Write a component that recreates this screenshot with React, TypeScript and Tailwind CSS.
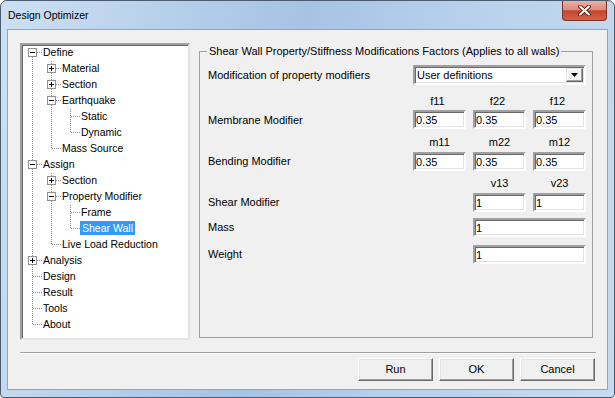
import React from "react";

type TreeNode = { label: string; box?: "+" | "-"; kids?: TreeNode[]; sel?: boolean };
type Row = { label: string; box?: "+" | "-"; sel?: boolean; last: boolean; first: boolean; trail: boolean[] };

const tree: TreeNode[] = [
  {
    label: "Define",
    box: "-",
    kids: [
      { label: "Material", box: "+" },
      { label: "Section", box: "+" },
      { label: "Earthquake", box: "-", kids: [{ label: "Static" }, { label: "Dynamic" }] },
      { label: "Mass Source" },
    ],
  },
  {
    label: "Assign",
    box: "-",
    kids: [
      { label: "Section", box: "+" },
      { label: "Property Modifier", box: "-", kids: [{ label: "Frame" }, { label: "Shear Wall", sel: true }] },
      { label: "Live Load Reduction" },
    ],
  },
  { label: "Analysis", box: "+" },
  { label: "Design" },
  { label: "Result" },
  { label: "Tools" },
  { label: "About" },
];

function flatten(nodes: TreeNode[], trail: boolean[], out: Row[]) {
  nodes.forEach((n, i) => {
    const last = i === nodes.length - 1;
    out.push({ label: n.label, box: n.box, sel: n.sel, last, first: trail.length === 0 && i === 0, trail });
    if (n.box === "-" && n.kids) flatten(n.kids, [...trail, last], out);
  });
  return out;
}

const dot = { stroke: "#8c8c8c", strokeDasharray: "1 1" };

function Guide({ on }: { on: boolean }) {
  return (
    <svg width="19" height="16" className="shrink-0">
      {on && <line x1="9.5" y1="0" x2="9.5" y2="16" {...dot} />}
    </svg>
  );
}

function Joint({ box, last, first }: { box?: "+" | "-"; last: boolean; first: boolean }) {
  const top = box ? 3 : 7;
  const bottom = box ? 12 : 8;
  return (
    <svg width="19" height="16" className="shrink-0">
      {!first && <line x1="9.5" y1="0" x2="9.5" y2={top} {...dot} />}
      {!last && <line x1="9.5" y1={bottom} x2="9.5" y2="16" {...dot} />}
      <line x1={box ? 14 : 10} y1="7.5" x2="19" y2="7.5" {...dot} />
      {box && (
        <>
          <rect x="5.5" y="3.5" width="8" height="8" fill="#fff" stroke="#8f8f8f" />
          <line x1="7" y1="7.5" x2="12" y2="7.5" stroke="#000" />
          {box === "+" && <line x1="9.5" y1="5" x2="9.5" y2="10" stroke="#000" />}
        </>
      )}
    </svg>
  );
}

function Field({ value }: { value: string }) {
  return (
    <input
      readOnly
      value={value}
      className="w-full h-[19px] bg-white border-2 border-t-[#a0a0a0] border-l-[#a0a0a0] border-r-white border-b-white shadow-[inset_1px_1px_0_#696969,inset_-1px_-1px_0_#e3e3e3] pl-[1px] text-[11px] text-black outline-none"
    />
  );
}

function Btn({ label }: { label: string }) {
  return (
    <button className="w-[75px] h-[23px] bg-[#f0f0f0] border border-t-white border-l-white border-r-[#696969] border-b-[#696969] shadow-[inset_-1px_-1px_0_#a0a0a0,inset_1px_1px_0_#e3e3e3] text-[11px] text-black">
      {label}
    </button>
  );
}

export default function App() {
  const rows = flatten(tree, [], []);
  return (
    <div className="w-[615px] h-[398px] bg-white font-['Liberation_Sans',Arial,sans-serif]">
      <div className="w-full h-full flex flex-col px-[6px] pb-[7px] border border-[#4b5b70] rounded-t-[7px] rounded-b-[4px] bg-[linear-gradient(100deg,#cde0f3_0%,#b6cfea_25%,#a7c3e3_45%,#b9d1ec_70%,#c6dbf1_100%)]">
        <div className="h-[28px] flex items-start justify-between">
          <span className="pl-[1px] pt-[8px] text-[10.5px] leading-[13px] text-black">Design Optimizer</span>
          <div className="mr-[1px] w-[45px] h-[20px] flex items-center justify-center rounded-b-[4px] border border-t-0 border-[#7a3024] bg-[linear-gradient(to_bottom,#eab0a4_0%,#dc8e7e_45%,#c5432f_52%,#d2644a_100%)]">
            <svg width="13" height="11" viewBox="0 0 13 11">
              <path d="M2 1.5 L11 9.5 M11 1.5 L2 9.5" stroke="#5a1a12" strokeWidth="4" strokeLinecap="round" />
              <path d="M2 1.5 L11 9.5 M11 1.5 L2 9.5" stroke="#fff" strokeWidth="2.2" strokeLinecap="round" />
            </svg>
          </div>
        </div>

        <div className="flex-1 flex flex-col bg-[#f0f0f0] border border-[#8fa6c0] text-[11px] text-black">
          <div className="flex pl-[12px] pt-[13px] gap-[9px]">
            <div className="w-[170px] h-[297px] bg-white border-2 border-t-[#a0a0a0] border-l-[#a0a0a0] border-r-[#e3e3e3] border-b-[#e3e3e3] shadow-[inset_1px_1px_0_#696969] pl-[1px] text-[10.5px]">
              {rows.map((r, i) => (
                <div key={i} className="flex items-start h-[16px]">
                  {r.trail.map((wasLast, j) => (
                    <Guide key={j} on={!wasLast} />
                  ))}
                  <Joint box={r.box} last={r.last} first={r.first} />
                  <span
                    className={
                      r.sel
                        ? "h-[14px] leading-[14px] px-[2px] bg-[#3399ff] text-white whitespace-nowrap"
                        : "h-[14px] leading-[14px] px-[1px] whitespace-nowrap"
                    }
                  >
                    {r.label}
                  </span>
                </div>
              ))}
            </div>

            <fieldset className="mt-[2px] w-[394px] h-[293px] border border-[#a0a0a0] pl-[7px] pr-[6px] flex flex-col">
              <legend className="px-[2px] leading-[13px]">
                Shear Wall Property/Stiffness Modifications Factors (Applies to all walls)
              </legend>

              <div className="flex items-center mt-[7px]">
                <span className="flex-1 pl-[1px]">Modification of property modifiers</span>
                <div className="w-[173px] h-[20px] flex items-center bg-white border-2 border-t-[#a0a0a0] border-l-[#a0a0a0] border-r-white border-b-white shadow-[inset_1px_1px_0_#696969,inset_-1px_-1px_0_#e3e3e3] pl-[2px] pr-[1px]">
                  <span className="flex-1">User definitions</span>
                  <div className="w-[17px] h-[14px] flex items-center justify-center bg-[#f0f0f0] border border-t-[#e3e3e3] border-l-[#e3e3e3] border-r-[#696969] border-b-[#696969] shadow-[inset_-1px_-1px_0_#a0a0a0,inset_1px_1px_0_#fff]">
                    <svg width="7" height="4" viewBox="0 0 7 4">
                      <path d="M0 0 H7 L3.5 4 Z" fill="#000" />
                    </svg>
                  </div>
                </div>
              </div>

              <div className="flex mt-[10px] h-[13px] leading-[13px]">
                <div className="flex-1" />
                <div className="w-[173px] grid grid-cols-3 gap-[7px] text-center">
                  <span className="pr-[4px]">f11</span>
                  <span className="pr-[4px]">f22</span>
                  <span className="pr-[4px]">f12</span>
                </div>
              </div>
              <div className="flex items-center mt-[2px]">
                <span className="flex-1 pl-[1px] pt-[1px]">Membrane Modifier</span>
                <div className="w-[173px] grid grid-cols-3 gap-[7px]">
                  <Field value="0.35" />
                  <Field value="0.35" />
                  <Field value="0.35" />
                </div>
              </div>

              <div className="flex mt-[7px] h-[13px] leading-[13px]">
                <div className="flex-1" />
                <div className="w-[173px] grid grid-cols-3 gap-[7px] text-center">
                  <span>m11</span>
                  <span>m22</span>
                  <span>m12</span>
                </div>
              </div>
              <div className="flex items-center mt-[3px]">
                <span className="flex-1 pl-[1px]">Bending Modifier</span>
                <div className="w-[173px] grid grid-cols-3 gap-[7px]">
                  <Field value="0.35" />
                  <Field value="0.35" />
                  <Field value="0.35" />
                </div>
              </div>

              <div className="flex mt-[6px] h-[13px] leading-[13px]">
                <div className="flex-1" />
                <div className="w-[173px] grid grid-cols-3 gap-[7px] text-center">
                  <span />
                  <span>v13</span>
                  <span>v23</span>
                </div>
              </div>
              <div className="flex items-center mt-[3px]">
                <span className="flex-1 pl-[1px]">Shear Modifier</span>
                <div className="w-[173px] grid grid-cols-3 gap-[7px]">
                  <span />
                  <Field value="1" />
                  <Field value="1" />
                </div>
              </div>

              <div className="flex items-center mt-[6px]">
                <span className="flex-1 pl-[1px]">Mass</span>
                <div className="w-[113px]">
                  <Field value="1" />
                </div>
              </div>
              <div className="flex items-center mt-[8px]">
                <span className="flex-1 pl-[1px]">Weight</span>
                <div className="w-[113px]">
                  <Field value="1" />
                </div>
              </div>
            </fieldset>
          </div>

          <div className="ml-[12px] mt-[12px] w-[576px] border-t border-b border-t-[#a0a0a0] border-b-white" />

          <div className="flex justify-end gap-[6px] pr-[12px] mt-[4px]">
            <Btn label="Run" />
            <Btn label="OK" />
            <Btn label="Cancel" />
          </div>
        </div>
      </div>
    </div>
  );
}
